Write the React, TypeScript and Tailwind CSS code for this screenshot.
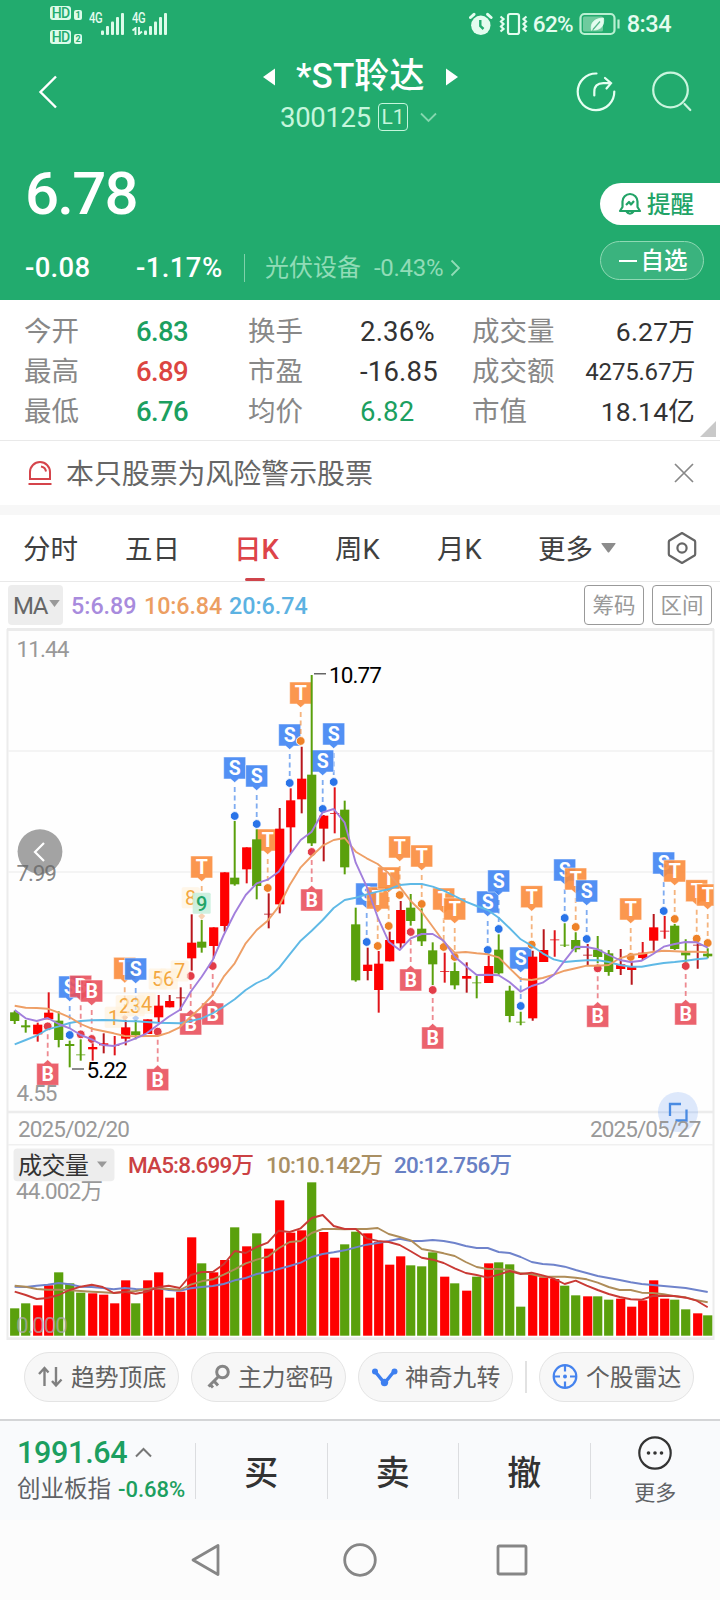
import React from "react";

type Candle = [string, number, number, number, number];

// colour (g = fall, r = rise, d = rise with dark wick), high, body top, body bottom, low; in thirds of a pixel
const candles: Candle[] = [
  ["g", 1172, 1177, 1203, 1212], ["g", 1200, 1216, 1222, 1238], ["r", 1208, 1214, 1243, 1265], ["r", 1117, 1178, 1198, 1198],
  ["g", 1174, 1202, 1260, 1282], ["g", 1262, 1272, 1278, 1342], ["g", 1258, 1303, 1306, 1322], ["r", 1270, 1281, 1288, 1322],
  ["d", 1240, 1270, 1276, 1300], ["r", 1248, 1275, 1278, 1306], ["d", 1200, 1222, 1256, 1276], ["g", 1200, 1234, 1245, 1258],
  ["r", 1198, 1198, 1242, 1242], ["r", 1125, 1157, 1192, 1210], ["d", 1125, 1143, 1162, 1162], ["d", 1102, 1132, 1135, 1172],
  ["d", 883, 968, 1015, 1052], ["g", 900, 965, 983, 998], ["r", 922, 922, 978, 1015], ["d", 757, 757, 918, 935],
  ["g", 603, 773, 793, 797], ["r", 682, 682, 748, 790], ["g", 628, 658, 798, 838], ["d", 820, 881, 884, 925],
  ["d", 564, 626, 853, 880], ["r", 505, 541, 622, 700], ["d", 380, 476, 538, 580], ["g", 165, 464, 670, 678],
  ["d", 585, 587, 626, 724], ["r", 502, 579, 582, 640], ["g", 542, 569, 742, 763], ["g", 863, 913, 1081, 1085],
  ["d", 983, 1034, 1053, 1081], ["r", 993, 1031, 1110, 1178], ["d", 935, 960, 1024, 1024], ["d", 843, 870, 970, 985],
  ["g", 822, 863, 903, 917], ["g", 865, 926, 964, 978], ["g", 967, 991, 1033, 1095], ["r", 998, 1053, 1056, 1088],
  ["g", 1027, 1053, 1096, 1108], ["d", 1027, 1068, 1076, 1118], ["g", 1068, 1087, 1090, 1135], ["r", 1007, 1038, 1089, 1089],
  ["g", 943, 989, 1060, 1064], ["g", 1097, 1112, 1188, 1207], ["g", 1175, 1205, 1208, 1216], ["d", 992, 1010, 1195, 1202],
  ["d", 928, 990, 1026, 1026], ["r", 931, 958, 961, 1010], ["g", 910, 974, 977, 981], ["g", 937, 960, 988, 997],
  ["d", 972, 1004, 1007, 1038], ["g", 948, 989, 1011, 1030], ["g", 990, 1000, 1056, 1067], ["d", 987, 1033, 1047, 1065],
  ["d", 1025, 1040, 1050, 1094], ["r", 966, 998, 1014, 1020], ["d", 882, 922, 962, 992], ["r", 888, 932, 935, 956],
  ["g", 912, 917, 987, 990], ["g", 958, 997, 1006, 1027], ["d", 970, 974, 977, 1046], ["g", 985, 1001, 1009, 1015],
];

const ma5 = [1170, 1195, 1203, 1194, 1212, 1225, 1245, 1258, 1275, 1278, 1268, 1255, 1240, 1215, 1190, 1170, 1115, 1070, 1020, 945, 880, 825, 790, 779, 755, 705, 660, 635, 577, 567, 608, 728, 800, 892, 965, 990, 955, 942, 942, 962, 1010, 1038, 1065, 1064, 1066, 1087, 1115, 1098, 1088, 1065, 1022, 980, 981, 988, 1005, 1020, 1026, 1022, 1003, 980, 972, 966, 967, 983];
const ma10 = [1157, 1163, 1164, 1166, 1178, 1192, 1212, 1226, 1233, 1240, 1248, 1249, 1248, 1248, 1238, 1222, 1190, 1160, 1125, 1070, 1030, 970, 930, 902, 860, 795, 742, 708, 677, 660, 654, 695, 715, 732, 760, 800, 843, 875, 920, 965, 998, 996, 1000, 1003, 1012, 1045, 1077, 1080, 1074, 1064, 1052, 1045, 1037, 1037, 1035, 1015, 1005, 1001, 996, 992, 994, 995, 995, 997];
const ma20 = [1273, 1260, 1247, 1228, 1219, 1209, 1203, 1201, 1200, 1201, 1203, 1204, 1206, 1208, 1209, 1210, 1203, 1195, 1180, 1160, 1138, 1110, 1089, 1074, 1045, 1003, 962, 932, 900, 864, 840, 833, 823, 815, 808, 795, 792, 792, 800, 812, 828, 845, 858, 870, 893, 925, 958, 977, 1000, 1018, 1026, 1023, 1021, 1021, 1026, 1035, 1040, 1040, 1034, 1029, 1026, 1022, 1018, 1015];

const volTops = [595, 580, 586, 526, 487, 520, 548, 550, 554, 580, 511, 580, 511, 487, 563, 545, 382, 460, 487, 450, 352, 409, 370, 416, 271, 368, 361, 217, 366, 443, 403, 365, 370, 396, 464, 439, 466, 469, 427, 500, 520, 542, 500, 460, 457, 463, 590, 493, 502, 507, 527, 556, 559, 559, 569, 566, 590, 571, 511, 566, 569, 598, 610, 616];
const vol5 = [545, 555, 567, 564, 555, 540, 530, 524, 531, 549, 545, 551, 545, 532, 527, 534, 495, 486, 486, 463, 423, 429, 411, 398, 362, 366, 355, 324, 315, 348, 357, 357, 385, 393, 396, 405, 424, 443, 449, 459, 475, 489, 495, 503, 494, 483, 492, 488, 496, 506, 522, 512, 527, 540, 552, 561, 568, 569, 558, 557, 558, 563, 572, 592];
const vol10 = [527, 530, 537, 539, 539, 541, 543, 545, 547, 549, 546, 543, 537, 534, 537, 540, 524, 514, 508, 494, 478, 460, 449, 440, 415, 396, 393, 369, 357, 357, 358, 357, 357, 354, 372, 381, 391, 417, 423, 430, 438, 456, 471, 477, 477, 480, 490, 493, 500, 500, 500, 503, 508, 518, 531, 540, 540, 548, 549, 553, 559, 562, 571, 577];
const vol20 = [530, 531, 527, 524, 519, 523, 530, 531, 534, 538, 534, 537, 538, 534, 540, 542, 535, 531, 528, 522, 511, 504, 492, 486, 477, 468, 458, 441, 432, 427, 421, 412, 404, 399, 393, 386, 393, 393, 390, 393, 399, 408, 414, 414, 426, 429, 441, 456, 462, 464, 470, 480, 489, 498, 504, 510, 517, 522, 525, 528, 531, 534, 540, 546];

type Marker = [string, number, number, string];
// letter, candle index, anchor y, placement (u = above, d = below, h = above without dot)
const markers: Marker[] = [
  ["B", 3, 1219, "d"], ["S", 5, 1245, "u"], ["B", 6, 1243, "u"], ["B", 7, 1257, "u"], ["T", 10, 1189, "h"], ["S", 11, 1191, "h"],
  ["B", 13, 1235, "d"], ["B", 16, 1068, "d"], ["T", 17, 885, "h"], ["B", 18, 1038, "d"], ["S", 20, 588, "u"], ["S", 22, 612, "u"],
  ["T", 23, 804, "u"], ["S", 25, 489, "u"], ["T", 26, 363, "u"], ["B", 27, 696, "d"], ["S", 29, 486, "u"], ["S", 28, 567, "u"],
  ["S", 32, 966, "u"], ["T", 33, 978, "u"], ["T", 34, 918, "u"], ["T", 35, 825, "u"], ["B", 36, 936, "d"], ["T", 37, 852, "u"],
  ["B", 38, 1110, "d"], ["T", 39, 981, "u"], ["T", 40, 1011, "u"], ["S", 43, 990, "u"], ["S", 44, 927, "u"], ["S", 46, 1158, "u"],
  ["T", 47, 974, "u"], ["S", 50, 894, "u"], ["T", 51, 921, "u"], ["S", 52, 957, "u"], ["B", 53, 1045, "d"], ["T", 56, 1011, "u"],
  ["S", 59, 873, "u"], ["T", 60, 897, "u"], ["B", 61, 1038, "d"], ["T", 62, 956, "u"], ["T", 63, 969, "u"],
];
const tagFill: Record<string, string> = { S: "#3f84f3", T: "#fb8c3c", B: "#e9515d" };
const dotFill: Record<string, string> = { S: "#2a74e8", T: "#ee8228", B: "#e23c48" };

const counts: [string, number, number][] = [
  ["1", 9, 1192], ["2", 10, 1157], ["3", 11, 1157], ["4", 12, 1150], ["5", 13, 1077], ["6", 14, 1077], ["7", 15, 1053], ["8", 16, 833], ["9", 17, 850],
];

const cx = (i: number) => 14.7 + 11 * i;
const py = (z: number) => 620 + z / 3;
const vy = (z: number) => 1110 + z / 3;
const line = (a: number[], f: (z: number) => number) => a.map((z, i) => `${cx(i).toFixed(1)},${f(z).toFixed(1)}`).join(" ");

function Tag({ m }: { m: Marker }) {
  const [k, i, z, side] = m;
  const x = cx(i);
  const y = py(z);
  const up = side !== "d";
  const top = up ? y - 59 : y + 37;
  const pointer = up
    ? `M${x - 11} ${top}h22v22h-7l-4 3.6l-4 -3.6h-7z`
    : `M${x - 11} ${top}h7l4 -3.6l4 3.6h7v22h-22z`;
  return (
    <g>
      <line x1={x} x2={x} y1={up ? top + 30 : y + 8} y2={up ? y - 4 : top - 4} stroke={dotFill[k]} strokeOpacity={0.6} strokeWidth={1.8} strokeDasharray="5 3.5" />
      <path d={pointer} fill={tagFill[k]} fillOpacity={0.9} stroke="#fff" strokeOpacity={0.7} strokeWidth={0.7} strokeLinejoin="round" />
      <text x={x} y={top + 18} textAnchor="middle" fontSize={19.5} fontWeight={700} fill="#fff">{k}</text>
    </g>
  );
}

function Chart() {
  return (
    <svg className="block" width="720" height="712" viewBox="0 628 720 712" fontFamily='Roboto, "Noto Sans CJK SC", sans-serif'>
      <clipPath id="panel"><rect x="7" y="628" width="706.6" height="712" /></clipPath>
      <rect x="7.5" y="630" width="706" height="709" fill="#fefefe" stroke="#ececec" strokeWidth="2" />
      <path d="M7 629.6h707" stroke="#ebebeb" strokeWidth="3" />
      <path d="M8 751h705M8 872h705M8 993h705" stroke="#f1f1f1" strokeWidth="1.4" />
      <path d="M8 1112h705" stroke="#ececec" strokeWidth="2.4" />
      <path d="M8 1144.8h705" stroke="#f0f0f0" strokeWidth="1.6" />
      <path d="M7 1338.4h707" stroke="#ececec" strokeWidth="2.4" />

      <g clipPath="url(#panel)">
        {markers.map((m, n) => <Tag key={n} m={m} />)}
        {markers.map(([k, i, z, side], n) =>
          side === "h" ? (
            <path key={n} d={`M${cx(i) - 3.5} ${py(z) + 1}l3.5 -3l3.5 3l-3.5 4z`} fill={dotFill[k]} fillOpacity={0.35} />
          ) : (
            <circle key={n} cx={cx(i)} cy={py(z)} r={4.4} fill={dotFill[k]} stroke="#fff" strokeWidth={0.9} />
          ),
        )}
        {counts.map(([t, i, z]) => (
          <g key={t}>
            <rect x={cx(i) - 9} y={py(z) - 10.5} width={18} height={21} rx={1.5} fill={t === "9" ? "#c9eedd" : "#fff0da"} fillOpacity={t === "9" ? 0.9 : 0.62} />
            <text x={cx(i)} y={py(z) + 7.2} textAnchor="middle" fontSize={20} fontWeight={t === "9" ? 500 : 400} fill={t === "9" ? "#22a468" : "#f3a740"}>{t}</text>
          </g>
        ))}
        {candles.map(([c, h, t, b, l], i) => {
          const x = cx(i) + (c === "g" ? 0 : 1);
          const fill = c === "g" ? "#5aa00c" : "#fe0000";
          const wick = c === "g" ? "#5aa00c" : c === "d" ? "#b8161c" : "#e0141a";
          const thin = b - t <= 3;
          return (
            <g key={i}>
              <line x1={x} x2={x} y1={py(h)} y2={py(l)} stroke={wick} strokeWidth={2} />
              <rect x={x - 4.6} width={9.2} y={py(t)} height={(b - t) / 3} fill={thin ? wick : fill} fillOpacity={thin ? 0.8 : 1} />
            </g>
          );
        })}
        <g fill="none" strokeWidth={1.9} strokeLinejoin="round">
          <polyline points={line(ma20, py)} stroke="#5fb9e6" />
          <polyline points={line(ma10, py)} stroke="#ee9f66" />
          <polyline points={line(ma5, py)} stroke="#a27fdc" />
        </g>
      </g>

      <path d="M314 673.8h12M72 1069h12" stroke="#666" strokeWidth="1.6" />
      <g fontSize="22.5" fontWeight="400">
        <text x="329" y="682.6" textLength="53" fill="#000">10.77</text>
        <text x="86.5" y="1077.8" textLength="41" fill="#000">5.22</text>
        <g fill="#999">
          <text x="16.5" y="657" textLength="53">11.44</text>
          <text x="16.5" y="1100.6" textLength="41">4.55</text>
          <text x="18" y="1136.8" textLength="112">2025/02/20</text>
        </g>
      </g>

      <circle cx="40" cy="851.6" r="22.4" fill="#a3a3a3" />
      <path d="M44 843l-9 9l9 9" fill="none" stroke="#fff" strokeWidth="2.2" />
      <text x="16.5" y="880.8" textLength="40.5" fontSize="22.5" fill="#666" fillOpacity="0.8">7.99</text>

      <circle cx="678" cy="1112" r="20" fill="#d9e6fb" fillOpacity="0.9" />
      <path d="M658 1112.2h40" stroke="#cbd8ee" strokeWidth="2" />
      <path d="M670 1116v-12h11M675.500 1120.500h11v-11" fill="none" stroke="#4a8be2" strokeWidth="2.3" />
      <text x="590" y="1136.8" textLength="111.500" fontSize="22.5" fill="#999">2025/05/27</text>

      <rect x="13.500" y="1148.600" width="101" height="32.600" rx="4" fill="#ededed" />
      <text x="18" y="1174" fontSize="24" textLength="71" fill="#333">成交量</text>
      <path d="M97 1161.500h10l-5 6z" fill="#999" />
      <g fontSize="22.500">
        <text x="128" y="1172.800" textLength="126" fontWeight="500" fill="#cb4143">MA5:8.699万</text>
        <text x="266" y="1172.800" textLength="117" fill="#a98f63" fontWeight="500">10:10.142万</text>
        <text x="394" y="1172.800" textLength="118" fill="#6880c4" fontWeight="500">20:12.756万</text>
        <text x="16" y="1199" textLength="87" fill="#999">44.002万</text>
      </g>

      {volTops.map((z, i) => {
        const red = candles[i][0] !== "g";
        return <rect key={i} x={cx(i) - 4.6 + (red ? 1 : 0)} width={9.2} y={vy(z)} height={1335.7 - vy(z)} fill={red ? "#fe0000" : "#5aa00c"} />;
      })}
      <g fill="none" strokeWidth={1.9} strokeLinejoin="round">
        <polyline points={line(vol20, vy)} stroke="#6f83cb" />
        <polyline points={line(vol10, vy)} stroke="#ae8c58" />
        <polyline points={line(vol5, vy)} stroke="#c93a35" />
      </g>
      <text x="16" y="1333" textLength="52" fontSize="22.500" fill="#aaa" fillOpacity="0.75">0.000</text>
    </svg>
  );
}

function Bars() {
  return (
    <svg width="25" height="24" viewBox="0 0 25 24" fill="#dcfbe9">
      <rect x="0" y="18.500" width="3" height="4.500" rx="1" />
      <rect x="5" y="14" width="3" height="9" rx="1" />
      <rect x="10" y="9.500" width="3" height="13.500" rx="1" />
      <rect x="15" y="5" width="3" height="18" rx="1" />
      <rect x="20" y="1" width="3" height="22" rx="1" />
    </svg>
  );
}

function Hd({ n }: { n: string }) {
  return (
    <div className="flex h-[14px] items-end gap-[3px] text-[#22ab6e]">
      <span className="flex h-[14px] w-[21px] items-center justify-center rounded-[3px] bg-[#dcfbe9] text-[14px] leading-[14px] font-medium tracking-[-0.800px]">HD</span>
      <span className="flex h-[10px] w-[8px] items-center justify-center rounded-[2px] bg-[#dcfbe9] text-[9px] leading-[10px] font-bold">{n}</span>
    </div>
  );
}

function StatusBar() {
  return (
    <div className="flex h-12 pl-[50px] text-[#e4fcef]">
      <div className="flex w-[39px] flex-col gap-[10px] pt-[6px]"><Hd n="1" /><Hd n="2" /></div>
      <div className="w-[12px] pt-[10px] text-[14px] leading-[16px] font-medium tracking-[-3px]"><span className="inline-block origin-left scale-x-[0.8] tracking-[-0.500px]">4G</span></div>
      <div className="pt-[12px]"><Bars /></div>
      <div className="ml-[6px] flex w-[12px] flex-col pt-[10px] text-[14px] leading-[16px] font-medium">
        <span className="inline-block origin-left scale-x-[0.8] tracking-[-0.500px]">4G</span>
        <svg className="mt-px" width="11" height="8" viewBox="0 0 11 8" fill="none" stroke="currentColor" strokeWidth="1.900"><path d="M0.500 3.500l3-2.500v7M10 4.500l-3 2.500v-7" /></svg>
      </div>
      <div className="pt-[12px]"><Bars /></div>
      <div className="ml-auto flex h-[48px] items-center pr-[49px]">
        <svg width="24" height="24" viewBox="0 0 24 24" fill="#e4fcef"><circle cx="11.800" cy="13.300" r="9.700" /><path d="M1.500 5.500L5 2.300M18.600 2.300l3.500 3.200" stroke="#e4fcef" strokeWidth="3" strokeLinecap="round" /><path d="M11.300 8v6l3.200 3" fill="none" stroke="#22ab6e" strokeWidth="2.400" /></svg>
        <svg className="ml-[6px]" width="30" height="24" viewBox="0 0 30 24" fill="none" stroke="#e4fcef" strokeWidth="2.200"><rect x="9" y="2" width="11" height="20" rx="2" /><path d="M1.500 4.500l3 2.500l-2.500 2.500l2.500 2.500l-2.500 2.500l2.500 2.500l-3 2.500M27.500 4.500l-3 2.500l2.500 2.500l-2.500 2.500l2.500 2.500l-2.500 2.500l3 2.500" /></svg>
        <span className="ml-[4px] w-[46px] pt-[2px] text-[22.500px] font-medium tracking-[-0.600px]">62%</span>
        <svg width="41" height="24" viewBox="0 0 41 24" fill="none" stroke="#b9f0d2" strokeWidth="2.200"><rect x="1.500" y="2" width="34" height="20" rx="4" /><rect x="4" y="4.500" width="20" height="15" rx="1.500" fill="#6fcb9e" stroke="none" /><path d="M39.500 7.500v9" /><path d="M12.500 18.500c-1.500-8 3-12 12-12.500c1 7-2 12-10 12l7-8" fill="#e4fcef" stroke="#e4fcef" strokeWidth="0.800" /><path d="M14 17.500l7-8" stroke="#55b78a" strokeWidth="1.200" /></svg>
        <span className="ml-[7px] pt-[2px] text-[23.500px] font-medium tracking-[-0.500px]">8:34</span>
      </div>
    </div>
  );
}

function Header() {
  return (
    <header className="h-[300px] bg-[#22ab6e] text-white">
      <StatusBar />
      <div className="flex h-[88px] items-center pl-[38px]">
        <svg width="20" height="34" viewBox="0 0 20 34" fill="none" stroke="white" strokeWidth="2.400"><path d="M18 1.500L2.500 17L18 32.500" /></svg>
        <div className="ml-[205px] flex w-[197px] flex-col">
          <div className="flex h-[48px] items-center pt-[2px]">
            <svg className="shrink-0" width="12" height="18" viewBox="0 0 12 17" fill="white"><path d="M12 0v17L0 8.500z" /></svg>
            <span className="ml-[21px] w-[129px] text-[35px] leading-[48px] font-medium tracking-[0.100px] whitespace-nowrap">*ST聆达</span>
            <svg className="ml-[21px] shrink-0" width="12" height="18" viewBox="0 0 12 17" fill="white"><path d="M0 0v17l12-8.500z" /></svg>
          </div>
          <div className="ml-[17px] flex h-[32px] items-center pt-[2px] text-[#c5f6dc]">
            <span className="w-[98px] pt-[2px] text-[27.500px] leading-8 tracking-[-0.300px]">300125</span>
            <span className="flex h-[28px] w-[30px] items-center justify-center rounded-[4px] border-[1.500px] border-[#c5f6dc] text-[21px] leading-6">L1</span>
            <svg className="ml-[12px]" width="17" height="11" viewBox="0 0 17 11" fill="none" stroke="#84d7af" strokeWidth="1.800"><path d="M1 1.500l7.500 7.500L16 1.500" /></svg>
          </div>
        </div>
        <svg className="ml-[115px]" width="42" height="42" viewBox="0 0 42 42" fill="none" stroke="#e6fff2" strokeWidth="2.200" strokeLinecap="round"><path d="M21.500 2.500a18.300 18.300 0 1 0 17.800 18" /><path d="M19.300 24.500v-3.500q0-8.800 9-8.800h7M30 7l6 5.200l-4.500 5.300" /></svg>
        <svg className="ml-[35px]" width="42" height="42" viewBox="0 0 42 42" fill="none" stroke="#c9f5de" strokeWidth="2.200" strokeLinecap="round"><circle cx="18.500" cy="19" r="17.300" /><path d="M32.500 33l5.800 6" /></svg>
      </div>
      <div className="flex h-[164px] justify-between">
        <div className="pl-[25px]">
          <div className="mt-[21px] h-[72px] text-[60px] leading-[74px] font-medium tracking-[-1.800px]">6.78</div>
          <div className="mt-[19px] flex h-[40px] items-center text-[27.500px]">
            <span className="w-[111px] font-medium tracking-[0.300px]">-0.08</span>
            <span className="w-[108px] font-medium tracking-[0.400px]">-1.17%</span>
            <span className="h-[28px] w-px bg-[#7fd1aa]" />
            <span className="ml-[20px] w-[109px] text-[24px] text-[#91dcb7]">光伏设备</span>
            <span className="text-[24px] tracking-[-0.300px] text-[#91dcb7]">-0.43%</span>
            <svg className="ml-[7px]" width="11" height="18" viewBox="0 0 11 18" fill="none" stroke="#91dcb7" strokeWidth="1.800"><path d="M1.500 1.500L9 9l-7.500 7.500" /></svg>
          </div>
        </div>
        <div className="flex w-[120px] flex-col pt-[47px]">
          <div className="flex h-[42px] items-center rounded-l-full bg-white pl-[18px] text-[23.500px] font-medium text-[#22a367]">
            <svg width="24" height="24" viewBox="0 0 24 24" fill="none" stroke="#22a367" strokeWidth="2.200" strokeLinejoin="round"><path d="M4.500 15V9.500a7.500 7.500 0 0 1 15 0V15l2.500 4H2z" /><path d="M8 13l3-3l2 2.500l3-3.500M8.500 19.500q3.500 4.500 7 0" /></svg>
            <span className="ml-[5px] pt-[3px]">提醒</span>
          </div>
          <div className="mt-[16px] flex h-[39px] w-[104px] items-center justify-center rounded-full border border-[#8fd9b4] bg-[#3ab37e] pl-[2px] text-[23.500px] font-medium"><span className="mr-[1px] inline-block h-[2px] w-[18px] bg-white" /><span className="ml-[3px] pt-[3px]">自选</span></div>
        </div>
      </div>
    </header>
  );
}

function Stats() {
  const rows: [string, string, string, string, string, string, string, string][] = [
    ["今开", "6.83", "text-[#1c9f60]", "换手", "2.36%", "text-[#333]", "成交量", "6.27万"],
    ["最高", "6.89", "text-[#dc4541]", "市盈", "-16.85", "text-[#333]", "成交额", "4275.67万"],
    ["最低", "6.76", "text-[#1c9f60]", "均价", "6.82", "text-[#1c9f60]", "市值", "18.14亿"],
  ];
  return (
    <section className="relative flex h-[141px] flex-col border-b-[1.500px] border-[#e9e9e9] pt-[12px]">
      {rows.map((r) => (
        <div key={r[0]} className="flex h-[40px] items-center pr-[25px] pl-[24px] text-[27.500px] leading-10">
          <span className="w-[112px] text-[#888]">{r[0]}</span>
          <span className={`w-[112px] font-medium tracking-[-0.600px] ${r[2]}`}>{r[1]}</span>
          <span className="w-[112px] text-[#888]">{r[3]}</span>
          <span className={`w-[112px] tracking-[0.200px] whitespace-nowrap ${r[5]}`}>{r[4]}</span>
          <span className="text-[#888]">{r[6]}</span>
          <span className={r[7].length > 7 ? "ml-auto text-[24px] text-[#333] tracking-[-0.200px]" : "ml-auto text-[26.500px] tracking-[0.200px] text-[#333]"}>{r[7]}</span>
        </div>
      ))}
      <svg className="absolute right-[4px] bottom-[3px]" width="16" height="16" viewBox="0 0 16 16" fill="#c9c9c9"><path d="M16 0v16H0z" /></svg>
    </section>
  );
}

function Notice() {
  return (
    <section className="flex h-[64px] items-center pr-[26px] pl-[27px]">
      <svg width="26" height="26" viewBox="0 0 26 26" fill="none" stroke="#d5444b" strokeWidth="2"><path d="M3 19v-7a10 10 0 0 1 20 0v7zM1.500 24h23" /><path d="M14 6.500c3 .5 4.500 2 5 5" /></svg>
      <span className="ml-[13px] pt-[4px] text-[27.900px] text-[#666]">本只股票为风险警示股票</span>
      <svg className="ml-auto" width="20" height="20" viewBox="0 0 20 20" stroke="#888" strokeWidth="1.700"><path d="M1 1l18 18M19 1L1 19" /></svg>
    </section>
  );
}

function Tabs() {
  return (
    <nav className="flex h-[67px] items-center border-b-[1.500px] border-[#e9e9e9] pl-[23px] text-[27.500px] text-[#404040]">
      <span className="w-[102px] pt-[4px]">分时</span>
      <span className="w-[109px] pt-[4px]">五日</span>
      <span className="relative flex h-[66px] w-[101px] items-center pt-[4px] font-medium text-[#dd4449]">
        日K
        <span className="absolute bottom-0 left-[11px] h-[3px] w-[20px] rounded-sm bg-[#cf444b]" />
      </span>
      <span className="w-[102px] pt-[4px]">周K</span>
      <span className="w-[101px] pt-[4px]">月K</span>
      <span className="w-[63px] pt-[4px]">更多</span>
      <svg width="15" height="10" viewBox="0 0 15 10" fill="#8c8c8c"><path d="M1 0h13q1 0 .4 1l-6 8q-.9 1-1.800 0l-6-8q-.6-1 .4-1z" /></svg>
      <svg className="ml-[50px]" width="32" height="34" viewBox="0 0 32 34" fill="none" stroke="#666" strokeWidth="2.200" strokeLinejoin="round"><path d="M16 2l12.500 7.500q.7.500.7 1.500v12q0 1-.7 1.500L16 32L3.500 24.500q-.7-.5-.7-1.500v-12q0-1 .7-1.500z" /><circle cx="16" cy="17" r="4.600" /></svg>
    </nav>
  );
}

function MaBar() {
  return (
    <div className="flex h-[46px] items-center pl-[8px] text-[23.300px] font-medium">
      <div className="flex h-[40px] w-[55px] items-center rounded-[4px] bg-[#ededed] pt-[2px] pl-[5px] text-[24px] font-normal tracking-[-1.500px] text-[#666]">
        MA
        <svg className="-mt-[5px] ml-[2px] shrink-0" width="11" height="7" viewBox="0 0 9 6" fill="#999"><path d="M0 0h9L4.500 6z" /></svg>
      </div>
      <span className="ml-[8px] w-[73px] pt-[3px] text-[#a88bdd]">5:6.89</span>
      <span className="w-[85px] pt-[3px] text-[#ec9e62] tracking-[-0.100px]">10:6.84</span>
      <span className="pt-[3px] text-[#5cb2e2]">20:6.74</span>
      <span className="ml-auto flex h-[40px] w-[60px] items-center justify-center rounded-[4px] border-[1.500px] border-[#999] pt-[2px] text-[21.500px] font-normal text-[#999]">筹码</span>
      <span className="mr-[8px] ml-[8px] flex h-[40px] w-[60px] items-center justify-center rounded-[4px] border-[1.500px] border-[#999] pt-[2px] text-[21.500px] font-normal text-[#999]">区间</span>
    </div>
  );
}

function Pill({ icon, label }: { icon: React.ReactNode; label: string }) {
  return (
    <div className="flex h-[50px] w-[155px] shrink-0 items-center rounded-full border border-[#e4e4e4] bg-[#f7f7f7] pl-[12px] text-[23.800px] text-[#606060]">
      {icon}
      <span className="ml-[6px] pt-[3px] whitespace-nowrap">{label}</span>
    </div>
  );
}

function Pills() {
  const box = { width: 28, height: 28, viewBox: "0 0 28 28", fill: "none" } as const;
  return (
    <div className="flex h-[79px] items-start pt-[12px] pl-[24px]">
      <Pill label="趋势顶底" icon={<svg {...box} stroke="#808080" strokeWidth="2.400"><path d="M7.500 23V5M2 11L7.500 5l4 4.500M19 4v18.500M24.500 16.500l-5.500 6l-4-4.500" /></svg>} />
      <div className="w-[12px]" />
      <Pill label="主力密码" icon={<svg {...box} stroke="#858585" strokeWidth="3"><circle cx="18.500" cy="9" r="5.800" /><path d="M14.500 13.500L4.500 23.500M10 18l4 4.500M6 21.500l3 3" /></svg>} />
      <div className="w-[12px]" />
      <Pill label="神奇九转" icon={<svg {...box} stroke="#3d7ff0" strokeWidth="2.600"><path d="M4 8.500L13.500 20L23 8.500" strokeWidth="3.400" /><g fill="#3d7ff0" stroke="none"><circle cx="4" cy="8.500" r="3" /><circle cx="23.500" cy="8.500" r="3" /><circle cx="13.500" cy="19.500" r="3.700" /></g></svg>} />
      <div className="mx-[12px] mt-[9px] h-[32px] w-[2px] bg-[#e2e2e2]" />
      <Pill label="个股雷达" icon={<svg {...box} stroke="#4583ee" strokeWidth="2.200"><circle cx="13" cy="13.500" r="11.300" /><path d="M13 2v6.500M13 18.500v6.500M1.500 13.500h6.500M18 13.500h6.500" /><circle cx="13" cy="13.500" r="2" fill="#4583ee" stroke="none" /></svg>} />
    </div>
  );
}

function ActionBar() {
  return (
    <footer className="flex h-[101px] items-center border-t-2 border-[#d4d5d7] bg-[#f9fafc]">
      <div className="flex w-[195px] flex-col pl-[17px]">
        <div className="flex h-[38px] items-center">
          <span className="text-[30.500px] leading-[38px] font-medium tracking-[-0.300px] text-[#1c9f60]">1991.64</span>
          <svg className="ml-[8px]" width="17" height="11" viewBox="0 0 17 11" fill="none" stroke="#777" strokeWidth="2"><path d="M1 9.500L8.500 2L16 9.500" /></svg>
        </div>
        <div className="flex h-[36px] items-center whitespace-nowrap">
          <span className="w-[101px] text-[23.500px] text-[#606266]">创业板指</span>
          <span className="text-[22px] font-medium text-[#1c9f60]">-0.68%</span>
        </div>
      </div>
      {["买", "卖", "撤"].map((t) => (
        <div key={t} className="flex h-[56px] w-[131.500px] items-center justify-center border-l border-[#dcdde0] pt-[5px] text-[34px] font-medium text-[#333]">{t}</div>
      ))}
      <div className="flex h-[56px] flex-1 flex-col items-center justify-center border-l border-[#dcdde0] text-[21px] text-[#606266]">
        <svg className="mt-[2px] shrink-0" width="36" height="36" viewBox="0 0 36 36"><circle cx="18" cy="18" r="15.700" fill="none" stroke="#333" strokeWidth="2.200" /><g fill="#333"><circle cx="11.500" cy="18" r="1.800" /><circle cx="18" cy="18" r="1.800" /><circle cx="24.500" cy="18" r="1.800" /></g></svg>
        <span className="mt-[6px] leading-8">更多</span>
      </div>
    </footer>
  );
}

function SystemNav() {
  return (
    <div className="flex h-[80px] items-center bg-[#fcfcfc] pl-[189px]">
      <svg width="34" height="36" viewBox="0 0 34 36" fill="none" stroke="#868686" strokeWidth="2.800" strokeLinejoin="round"><path d="M29 3.500v29L4 18z" /></svg>
      <svg className="ml-[119px]" width="36" height="36" viewBox="0 0 36 36" fill="none" stroke="#868686" strokeWidth="2.800"><circle cx="18" cy="18" r="15.300" /></svg>
      <svg className="ml-[116px]" width="36" height="36" viewBox="0 0 36 36" fill="none" stroke="#868686" strokeWidth="2.800"><rect x="4" y="4" width="28" height="28" rx="1.500" /></svg>
    </div>
  );
}

export default function App() {
  return (
    <div className="h-[1600px] w-[720px] overflow-hidden bg-white font-[Roboto,'Noto_Sans_CJK_SC',sans-serif]">
      <Header />
      <Stats />
      <Notice />
      <div className="h-[10px] bg-[#f7f7f7]" />
      <Tabs />
      <MaBar />
      <Chart />
      <Pills />
      <ActionBar />
      <SystemNav />
    </div>
  );
}
